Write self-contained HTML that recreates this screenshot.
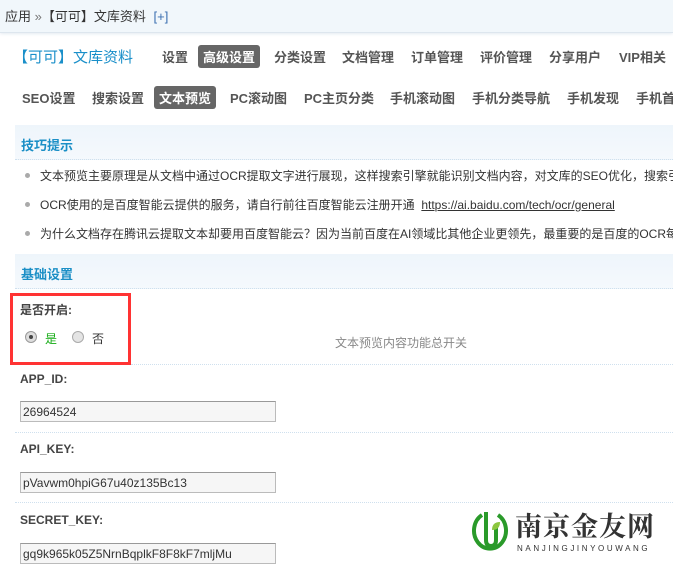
<!DOCTYPE html>
<html><head><meta charset="utf-8"><style>
*{margin:0;padding:0;box-sizing:border-box}
body{width:673px;height:564px;overflow:hidden;background:#fff;font-family:"Liberation Sans","Noto Sans CJK SC",sans-serif;font-size:12px;color:#333;position:relative}
.a{position:absolute;white-space:nowrap}
.top{left:0;top:0;width:673px;height:33px;background:#f1f7fb;border-bottom:1px solid #dde6ee;box-shadow:0 1px 3px #e4ebf1}
.nav b{position:absolute;font-size:13px;color:#555;font-weight:bold;white-space:nowrap}
.act{background:#666;color:#fff!important;border-radius:3px;padding:2px 5px}
.hd{left:15px;width:658px;height:35px;background:linear-gradient(#eef5fb,#f5f9fd);border-bottom:1px dotted #cfe0ee;color:#1b8fc6;font-weight:bold;font-size:13px;padding:10px 0 0 6px}
.li{left:25px;font-size:12px;color:#333}
.li:before{content:"";position:absolute;left:0;top:6px;width:5px;height:5px;border-radius:50%;background:#aaa}
.li span{margin-left:15px}
.lb{left:20px;font-weight:bold;font-size:12px;color:#444}
.in{left:20px;width:256px;height:21px;border:1px solid #bbb;border-top-color:#999;background:#f6f6f6;font-size:12px;color:#333;padding:3px 2px}
.sep{left:15px;width:658px;border-top:1px dotted #cfe0ee;height:0}
</style></head><body>
<div class="a top"></div>
<div class="a" style="left:5px;top:6px;color:#333;font-size:13px">应用 <span style="color:#777">»</span>【可可】文库资料 <span style="color:#3a6fb0;margin-left:4px">[+]</span></div>
<div class="a" style="left:13px;top:46px;font-size:15px;color:#1a8fc9">【可可】文库资料</div>
<div class="nav">
<b style="left:162px;top:47px">设置</b>
<b class="act" style="left:198px;top:45px">高级设置</b>
<b style="left:274px;top:47px">分类设置</b>
<b style="left:342px;top:47px">文档管理</b>
<b style="left:411px;top:47px">订单管理</b>
<b style="left:480px;top:47px">评价管理</b>
<b style="left:549px;top:47px">分享用户</b>
<b style="left:619px;top:47px">VIP相关</b>
<b style="left:22px;top:88px">SEO设置</b>
<b style="left:92px;top:88px">搜索设置</b>
<b class="act" style="left:154px;top:86px">文本预览</b>
<b style="left:230px;top:88px">PC滚动图</b>
<b style="left:304px;top:88px">PC主页分类</b>
<b style="left:390px;top:88px">手机滚动图</b>
<b style="left:472px;top:88px">手机分类导航</b>
<b style="left:567px;top:88px">手机发现</b>
<b style="left:636px;top:88px">手机首</b>
</div>
<div class="a hd" style="top:125px">技巧提示</div>
<div class="a li" style="top:167px"><span>文本预览主要原理是从文档中通过OCR提取文字进行展现，这样搜索引擎就能识别文档内容，对文库的SEO优化，搜索引</span></div>
<div class="a li" style="top:196px"><span>OCR使用的是百度智能云提供的服务，请自行前往百度智能云注册开通&nbsp;&nbsp;<u>https://ai.baidu.com/tech/ocr/general</u></span></div>
<div class="a li" style="top:225px"><span>为什么文档存在腾讯云提取文本却要用百度智能云？因为当前百度在AI领域比其他企业更领先，最重要的是百度的OCR每</span></div>
<div class="a hd" style="top:254px">基础设置</div>
<div class="a" style="left:10px;top:293px;width:121px;height:72px;border:3px solid #f33"></div>
<div class="a lb" style="top:301px">是否开启:</div>
<div class="a" style="left:25px;top:331px;width:12px;height:12px;border-radius:50%;border:1px solid #999;background:#ddd"><div style="margin:3px;width:4px;height:4px;border-radius:50%;background:#444"></div></div>
<div class="a" style="left:45px;top:330px;color:#1a1">是</div>
<div class="a" style="left:72px;top:331px;width:12px;height:12px;border-radius:50%;border:1px solid #aaa;background:#e4e4e4"></div>
<div class="a" style="left:92px;top:330px">否</div>
<div class="a" style="left:335px;top:334px;color:#888">文本预览内容功能总开关</div>
<div class="a sep" style="top:364px;left:131px;width:542px"></div>
<div class="a lb" style="top:372px">APP_ID:</div>
<div class="a in" style="top:401px">26964524</div>
<div class="a sep" style="top:432px"></div>
<div class="a lb" style="top:442px">API_KEY:</div>
<div class="a in" style="top:472px">pVavwm0hpiG67u40z135Bc13</div>
<div class="a sep" style="top:502px"></div>
<div class="a lb" style="top:513px">SECRET_KEY:</div>
<div class="a in" style="top:543px">gq9k965k05Z5NrnBqplkF8F8kF7mljMu</div>
<svg class="a" style="left:470px;top:510px" width="40" height="44" viewBox="0 0 40 44"><path d="M12 5 A16 18 0 1 0 28 5" fill="none" stroke="#2a9a2a" stroke-width="4"/><path d="M16 2 V30 Q16 36 21 36 Q26 36 26 30 V18" fill="none" stroke="#2a9a2a" stroke-width="4"/><path d="M22 20 Q22 12 30 12 Q30 20 22 20Z" fill="#8cc63f"/></svg>
<div class="a" style="left:515px;top:509px;font-size:27px;font-weight:bold;color:#333;font-family:'Noto Serif CJK SC',serif;letter-spacing:1px;line-height:32px">南京金友网</div>
<div class="a" style="left:517px;top:544px;font-size:8px;color:#333;letter-spacing:2.6px">NANJINGJINYOUWANG</div>
</body></html>
